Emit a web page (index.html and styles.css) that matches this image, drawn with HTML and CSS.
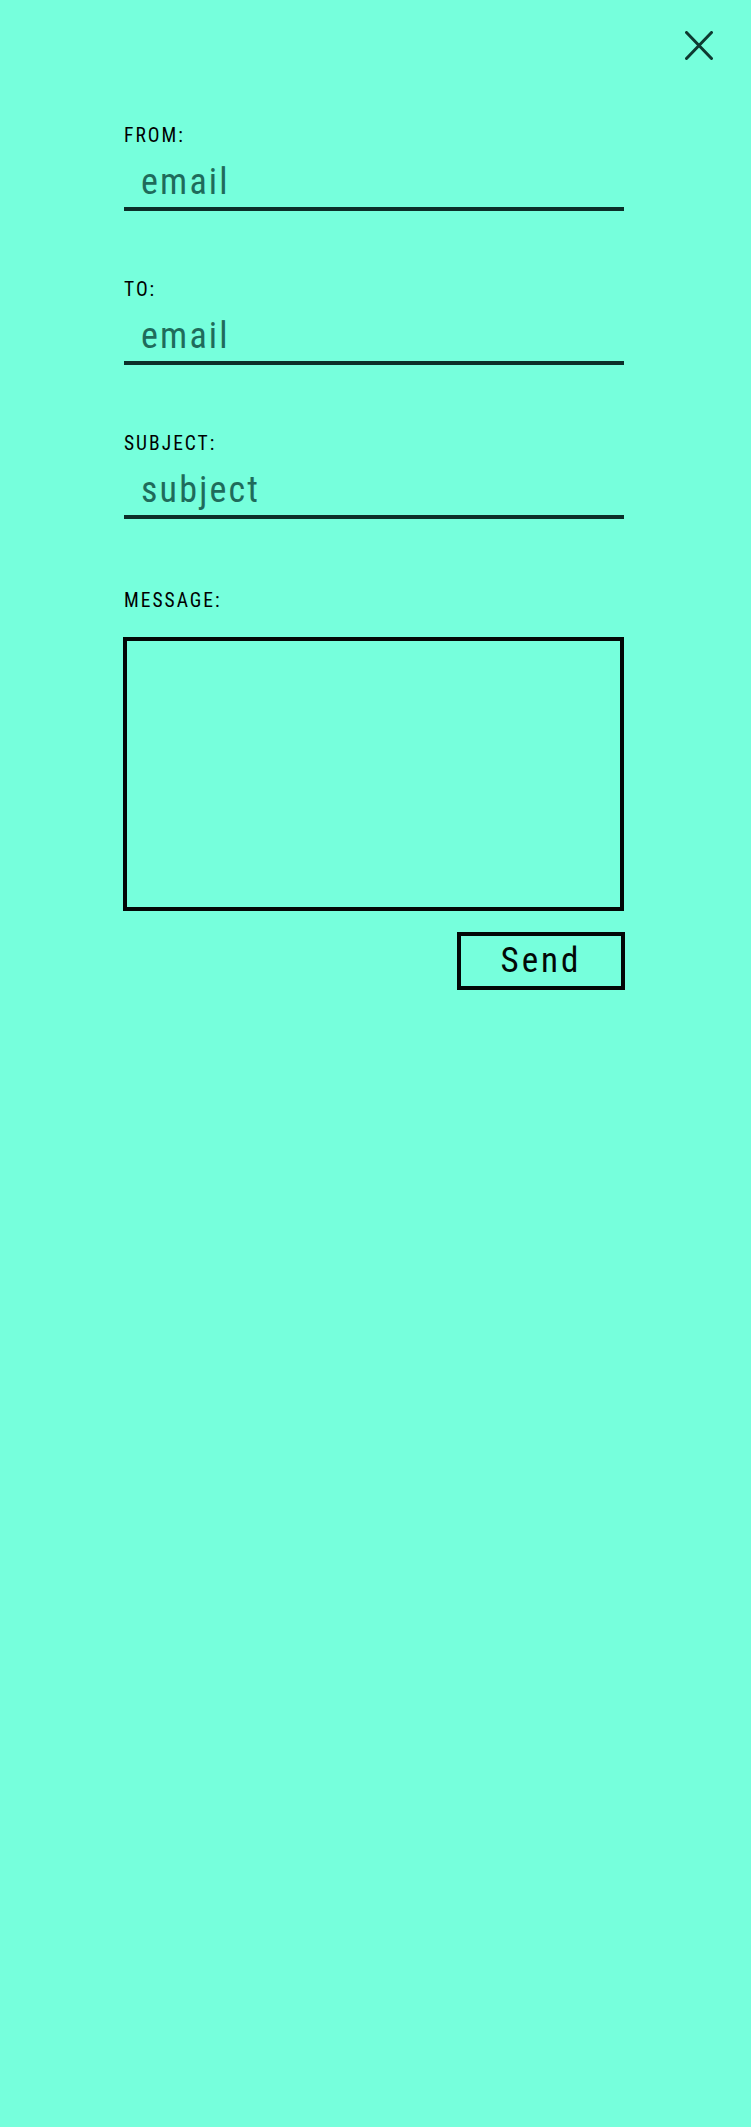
FILE: index.html
```html
<!DOCTYPE html>
<html lang="en">
<head>
<meta charset="utf-8">
<title>Send mail</title>
<link rel="stylesheet" href="styles.css">
</head>
<body>
<div class="page">
  <header class="topbar">
    <button class="close" type="button" aria-label="Close">
      <svg width="28" height="29" viewBox="0 0 28 29" aria-hidden="true">
        <path d="M1.5 1.5 L26.5 27.5 M26.5 1.5 L1.5 27.5" stroke="currentColor" stroke-width="3" fill="none" stroke-linecap="round"/>
      </svg>
    </button>
  </header>
  <form class="mail-form">
    <div class="field">
      <label class="label" for="from">FROM:</label>
      <input class="line-input" id="from" type="email" placeholder="email">
    </div>
    <div class="field">
      <label class="label" for="to">TO:</label>
      <input class="line-input" id="to" type="email" placeholder="email">
    </div>
    <div class="field">
      <label class="label" for="subject">SUBJECT:</label>
      <input class="line-input" id="subject" type="text" placeholder="subject">
    </div>
    <div class="field field-message">
      <label class="label" for="message">MESSAGE:</label>
      <textarea class="message" id="message"></textarea>
    </div>
    <div class="actions">
      <button class="send" type="submit">Send</button>
    </div>
  </form>
</div>
</body>
</html>
```
FILE: styles.css
```css
html, body {
  margin: 0;
  padding: 0;
  background: #76ffdc;
}

body {
  font-family: "Roboto Condensed", Roboto, "Liberation Sans", Arial, sans-serif;
  font-stretch: 80%;
  color: #000;
  min-height: 2127px;
}

.page {
  display: flex;
  flex-direction: column;
}

.topbar {
  display: flex;
  justify-content: flex-end;
  padding: 31px 38px 0 0;
  height: 29px;
}

.close {
  display: block;
  padding: 0;
  margin: 0;
  border: none;
  background: none;
  color: #0e3a31;
  width: 28px;
  height: 29px;
  cursor: pointer;
}

.close svg {
  display: block;
}

.mail-form {
  display: flex;
  flex-direction: column;
  gap: 68px;
  width: 500px;
  margin: 65px 0 0 124px;
}

.field {
  display: flex;
  flex-direction: column;
  gap: 14px;
}

.field-message {
  margin-top: 3px;
  gap: 25px;
}

.label {
  display: block;
  font-size: 19.5px;
  font-weight: 400;
  line-height: 22px;
  height: 22px;
  letter-spacing: 2px;
  color: #000;
}

.line-input {
  display: block;
  box-sizing: content-box;
  width: 483px;
  height: 42px;
  margin: 0;
  padding: 0 0 4px 17px;
  border: none;
  border-bottom: 4px solid #0b2f29;
  background: transparent;
  font-family: inherit;
  font-stretch: inherit;
  font-size: 36px;
  line-height: 42px;
  letter-spacing: 2.2px;
  color: #1f6b5b;
  outline: none;
}

.line-input::placeholder {
  color: #1f6b5b;
  opacity: 1;
}

.message {
  display: block;
  box-sizing: border-box;
  width: 501px;
  height: 274px;
  margin: 0 0 0 -1px;
  border: 4px solid #020806;
  background: transparent;
  resize: none;
  outline: none;
  font-family: inherit;
  font-size: 20px;
}

.actions {
  display: flex;
  justify-content: flex-end;
  margin-top: -47px;
  margin-right: -1px;
}

.send {
  box-sizing: border-box;
  width: 168px;
  height: 58px;
  margin: 0;
  padding: 0;
  border: 4px solid #020806;
  background: transparent;
  font-family: inherit;
  font-stretch: inherit;
  font-size: 35px;
  line-height: 42px;
  letter-spacing: 3px;
  color: #020806;
  cursor: pointer;
}
```
